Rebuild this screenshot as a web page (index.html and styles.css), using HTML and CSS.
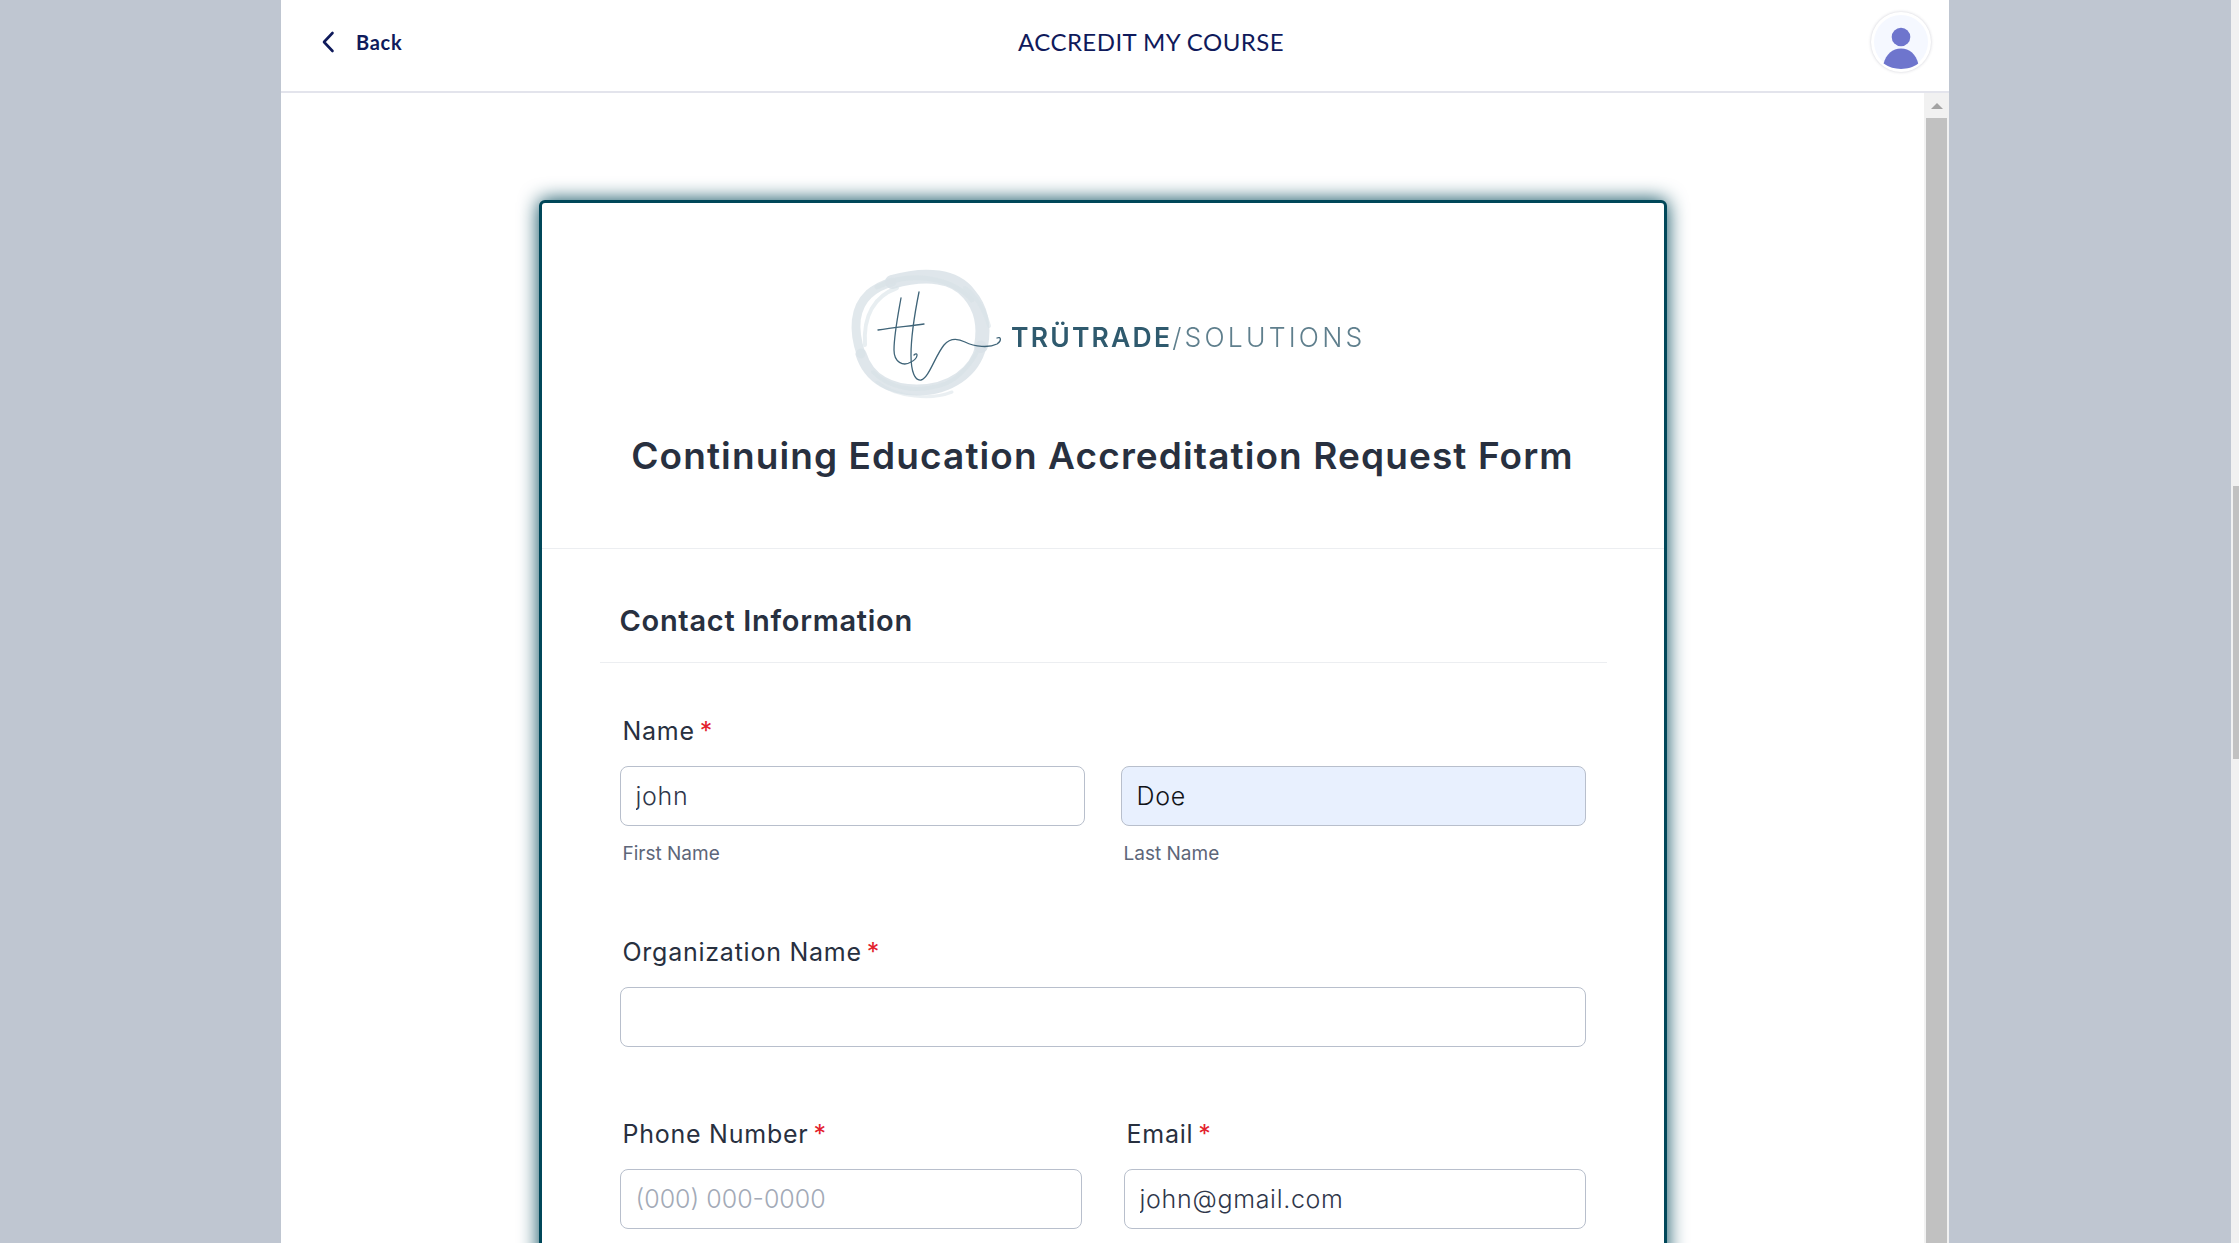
FILE: index.html
```html
<!DOCTYPE html>
<html lang="en">
<head>
<meta charset="utf-8">
<title>Accredit My Course</title>
<link rel="stylesheet" href="styles.css">
</head>
<body>
<div class="backdrop">
  <div class="panel">
    <header class="topbar">
      <a class="back">
        <svg class="chevron" viewBox="0 0 14 22" width="14" height="22"><path d="M11.5 2 L3 11 L11.5 20" fill="none" stroke="#0f1a5b" stroke-width="2.6" stroke-linecap="round" stroke-linejoin="round"/></svg>
        <span>Back</span>
      </a>
      <div class="app-title">ACCREDIT MY COURSE</div>
      <div class="avatar">
        <svg viewBox="0 0 60 60" width="60" height="60">
          <circle cx="30" cy="30" r="27" fill="#f5f8ff"/>
          <circle cx="30" cy="25" r="9.3" fill="#6e75cd"/>
          <path d="M12.6 51.6 C15 42 21.5 36.4 30 36.4 C38.500 36.4 45 42 47.200 51.600 C42 55.600 36 57 30 57 C24 57 18 55.600 12.600 51.600 Z" fill="#6e75cd"/>
        </svg>
      </div>
    </header>
    <div class="body-row">
      <main class="content">
        <section class="card">
          <div class="card-head">
            <svg class="logo" viewBox="845 265 525 140" width="525" height="140">
              <g fill="none" stroke="#d9e2e7" stroke-linecap="round">
                <path d="M895 282 C930 272 958 276 972 294 C984 308 988 325 984 346" stroke-width="14" opacity=".85"/>
                <path d="M880 287 C915 270 955 278 975 300" stroke-width="5" opacity=".7"/>
                <path d="M984 346 C978 372 953 390 920 390 C895 390 872 380 864 354" stroke-width="11" opacity=".85"/>
                <path d="M864 354 C856 330 857 308 872 294 C880 287 888 284 895 282" stroke-width="9" opacity=".8"/>
                <path d="M868 345 C866 315 878 296 900 288" stroke-width="4" opacity=".6"/>
                <path d="M876 372 C892 388 918 394 948 384 C962 378 974 364 980 352" stroke-width="4" opacity=".7"/>
                <path d="M880 382 C900 398 935 400 955 392" stroke-width="3" opacity=".55"/>
                <path d="M968 288 C982 298 988 312 992 326" stroke-width="4" opacity=".6"/>
              </g>
              <g fill="none" stroke="#3f6478" stroke-width="1.300" stroke-linecap="round" stroke-linejoin="round">
                <path d="M904 298 C901 315 897 335 897 350 C897 362 906 367 914 362 C922 358 921 351 917 355"/>
                <path d="M922 292 C918 312 914 335 914 355 C914 372 918 381 924 380 C932 378 938 356 947 345 C953 338 960 338 968 342 C978 347 992 348 1000 344 C1005 341 1004 336 1000 338"/>
                <path d="M881 330 C895 328 912 326 927 324"/>
              </g>
              <text class="logo-text" x="1014" y="347"><tspan class="logo-strong">TRÜTRADE</tspan><tspan class="logo-light">/SOLUTIONS</tspan></text>
            </svg>
            <h1 class="form-title">Continuing Education Accreditation Request Form</h1>
          </div>
          <div class="form-section">
            <h2 class="section-title">Contact Information</h2>
            <div class="fields">
              <div class="field-block">
                <div class="label">Name<span class="req">*</span></div>
                <div class="two-col">
                  <div class="col">
                    <input class="input" type="text" value="john">
                    <div class="sublabel">First Name</div>
                  </div>
                  <div class="col">
                    <input class="input input-filled" type="text" value="Doe">
                    <div class="sublabel">Last Name</div>
                  </div>
                </div>
              </div>
              <div class="field-block">
                <div class="label">Organization Name<span class="req">*</span></div>
                <input class="input" type="text">
              </div>
              <div class="two-col wide-gap">
                <div class="col">
                  <div class="label">Phone Number<span class="req">*</span></div>
                  <input class="input" type="text" placeholder="(000) 000-0000">
                </div>
                <div class="col">
                  <div class="label">Email<span class="req">*</span></div>
                  <input class="input" type="text" value="john@gmail.com">
                </div>
              </div>
            </div>
          </div>
        </section>
      </main>
      <div class="inner-scroll">
        <div class="arrow-zone"><span class="arrow-up"></span></div>
        <div class="inner-thumb"></div>
      </div>
    </div>
  </div>
</div>
<div class="page-scroll"><div class="page-thumb"></div></div>
</body>
</html>
```
FILE: styles.css
```css
* { box-sizing: border-box; }
html, body { height: 100%; margin: 0; }
body {
  display: flex;
  overflow: hidden;
  font-family: "Inter", "Liberation Sans", sans-serif;
  background: #bfc6d1;
  color: #28303f;
}
.backdrop { flex: 1; display: flex; padding-left: 281px; min-width: 0; height: 1243px; }
.panel { width: 1668px; height: 100%; background: #fff; display: flex; flex-direction: column; overflow: hidden; }
.topbar {
  height: 93px;
  flex: none;
  border-bottom: 2px solid #e3e4ec;
  display: flex;
  align-items: center;
  padding: 0 18px 8px 40px;
  color: #0f1a5b;
}
.back { display: flex; align-items: center; gap: 21px; font: 700 20px/24px "Lato", sans-serif; width: 101px; letter-spacing: .7px; }
.chevron { flex: none; }
.app-title { margin-left: 596px; font: 400 24px/30px "Lato", sans-serif; letter-spacing: .45px; white-space: nowrap; }
.avatar { margin-left: auto; width: 60px; height: 60px; border-radius: 50%; background: #fff; box-shadow: 0 0 3px rgba(60,60,90,.25); }
.avatar svg { display: block; }
.body-row { flex: 1; display: flex; min-height: 0; }
.content { flex: 1; padding-top: 107px; display: flex; justify-content: center; min-width: 0; overflow: hidden; }
.card {
  width: 1128px;
  height: 1400px;
  flex: none;
  border: 3px solid #004759;
  border-radius: 6px;
  background: #fff;
  box-shadow: 0 0 20px #004759;
}
.card-head { height: 346px; border-bottom: 1px solid #eceef1; padding-top: 62px; display: flex; flex-direction: column; align-items: center; }
.logo { display: block; flex: none; filter: blur(.5px); margin-left: 3px; }
.logo-text { font-family: "Inter", sans-serif; font-size: 26.500px; }
.logo-strong { fill: #2f5a6e; font-weight: 600; letter-spacing: 2.200px; }
.logo-light { fill: #5f7f8d; font-weight: 300; letter-spacing: 3.200px; }
.form-title { margin: 24px 0 0; font: 600 37px/54px "Inter", sans-serif; color: #28303f; letter-spacing: 1.1px; white-space: nowrap; }
.form-section { padding: 0 57px 0 58px; }
.section-title { margin: 0; height: 114px; padding: 52px 0 0 20px; border-bottom: 1px solid #eceef1; font: 600 29px/40px "Inter", sans-serif; color: #28303f; letter-spacing: .7px; }
.fields { padding: 51px 21px 0 20px; display: flex; flex-direction: column; gap: 68px; }
.two-col { display: flex; gap: 36px; }
.wide-gap { gap: 42px; margin-top: 2px; }
.col { flex: 1; min-width: 0; }
.label { height: 34px; margin: 0 0 18px 3px; font: 400 25px/34px "Inter", sans-serif; letter-spacing: .75px; color: #28303f; white-space: nowrap; }
.req { color: #e3212c; margin-left: 5px; }
.input {
  display: block;
  width: 100%;
  height: 60px;
  border: 1px solid #b8bfcc;
  border-radius: 8px;
  background: #fff;
  padding: 0 15px;
  font: 300 25px "Inter", sans-serif;
  letter-spacing: .7px;
  color: #2f374a;
  outline: none;
}
.input::placeholder { color: #a3aab7; opacity: 1; letter-spacing: 0; }
.input-filled { background: #e8f0fe; color: #111318; }
.sublabel { margin: 15px 0 0 3px; font: 400 19px/26px "Inter", sans-serif; color: #5d6679; }
.inner-scroll { width: 25px; flex: none; background: #f1f1f1; display: flex; flex-direction: column; align-items: center; }
.arrow-zone { height: 25px; display: flex; align-items: center; justify-content: center; flex: none; }
.arrow-up { width: 0; height: 0; border-left: 6px solid transparent; border-right: 6px solid transparent; border-bottom: 6px solid #a3a3a3; }
.inner-thumb { width: 21px; flex: 1; background: #c1c1c1; }
.page-scroll { width: 8px; flex: none; height: 1243px; background: #f1f1f1; padding: 486px 0 484px 2px; }
.page-thumb { height: 100%; background: #c1c1c1; }
```
